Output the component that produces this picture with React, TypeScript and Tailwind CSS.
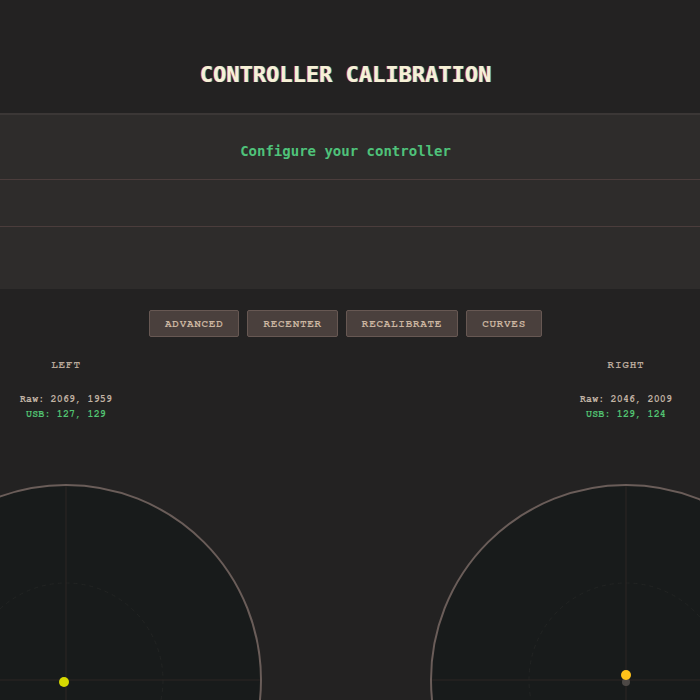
const buttons = ['ADVANCED', 'RECENTER', 'RECALIBRATE', 'CURVES'];

type Stick = {
    label: string;
    raw: string;
    usb: string;
    dot: string;
    dotX: number;
    dotY: number;
    ghost: boolean;
};

const sticks: Stick[] = [
    { label: 'LEFT', raw: 'Raw: 2069, 1959', usb: 'USB: 127, 129', dot: '#d6d800', dotX: 192, dotY: 196, ghost: false },
    { label: 'RIGHT', raw: 'Raw: 2046, 2009', usb: 'USB: 129, 124', dot: '#ffc21a', dotX: 194, dotY: 189, ghost: true },
];

const StickView = ({ stick }: { stick: Stick }) => (
    <div className="w-[132px] flex flex-col items-center">
        <div className="mt-[22px] text-[11px] font-bold tracking-[0.8px] text-[#b8a89a] leading-none">
            {stick.label}
        </div>
        <div className="mt-[22px] text-[10px] font-bold tracking-[0.15px] text-[#c2b3a4] leading-[15px]">{stick.raw}</div>
        <div className="text-[10px] font-bold tracking-[0.15px] text-[#52c472] leading-[15px]">{stick.usb}</div>

        <div className="mt-[62px] shrink-0 w-[392px] h-[392px] rounded-full border-2 border-[#6a5d59] bg-[#181b1b]">
            <svg width="388" height="388" viewBox="0 0 388 388">
                <circle cx="194" cy="194" r="97" fill="none" stroke="#222423" strokeWidth="1" strokeDasharray="4 4" />
                <line x1="194" y1="0" x2="194" y2="388" stroke="#2c2725" strokeWidth="1" />
                <line x1="0" y1="194" x2="388" y2="194" stroke="#2c2725" strokeWidth="1" />
                {stick.ghost && <circle cx="194" cy="196" r="4" fill="#5a5450" opacity="0.8" />}
                <circle cx={stick.dotX} cy={stick.dotY} r="5" fill={stick.dot} />
            </svg>
        </div>
    </div>
);

export default function App() {
    return (
        <div className="w-[700px] h-[700px] overflow-hidden bg-[#232222] font-[family-name:'Nimbus_Mono_PS','FreeMono','Courier_New',Courier,monospace]">
            {/* Header */}
            <div className="h-[113px] flex items-center justify-center pt-[37px] pr-[9px]">
                <h1
                    className="font-[family-name:'DejaVu_Sans_Mono',monospace] font-bold text-[22px] text-[#f6f1d6] leading-none"
                    style={{ textShadow: '-1px 0 rgba(255,50,50,0.7), 1px 0 rgba(50,220,255,0.7)' }}
                >
                    CONTROLLER CALIBRATION
                </h1>
            </div>

            {/* Panel */}
            <div className="bg-[#2e2c2b] border-t-2 border-[#3b3736]">
                <div className="h-[65px] pt-[8px] pr-[9px] flex items-center justify-center border-b border-[#4b3d3c]">
                    <span className="font-[family-name:'DejaVu_Sans_Mono',monospace] font-bold text-[14px] text-[#4fc27a]">
                        Configure your controller
                    </span>
                </div>
                <div className="h-[47px] border-b border-[#4b3d3c]"></div>
                <div className="h-[62px]"></div>
            </div>

            {/* Buttons */}
            <div className="flex justify-center gap-[8px] mt-[21px] pr-[9px]">
                {buttons.map((b) => (
                    <button
                        key={b}
                        className="h-[27px] px-[15px] rounded-[2px] border border-[#675853] bg-[#4a403d] text-[11px] font-bold tracking-[0.7px] text-[#cbb5a0] leading-none"
                    >
                        {b}
                    </button>
                ))}
            </div>

            {/* Sticks */}
            <div className="flex justify-between pr-[8px]">
                {sticks.map((s) => (
                    <StickView key={s.label} stick={s} />
                ))}
            </div>
        </div>
    );
}
